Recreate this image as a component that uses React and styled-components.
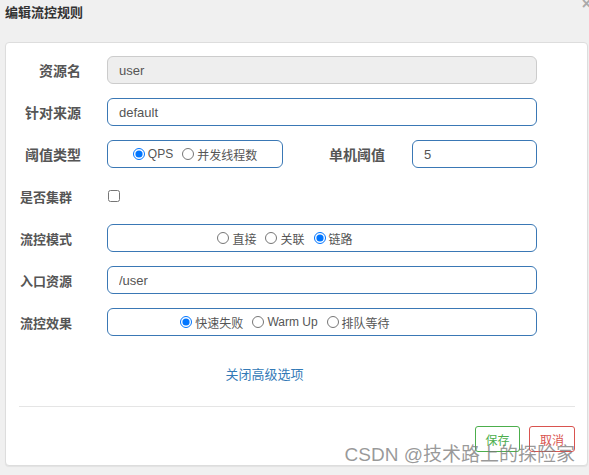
import React from 'react';
import styled, { createGlobalStyle } from 'styled-components';

const GlobalStyle = createGlobalStyle`
  html, body {
    margin: 0;
    padding: 0;
    background: #f0f0f0;
    font-family: "Liberation Sans", "Noto Sans CJK SC", sans-serif;
  }
  * { box-sizing: border-box; }
`;

const Page = styled.div`
  position: relative;
  width: 589px;
  height: 475px;
  overflow: hidden;
  background: #f0f0f0;
`;

const Header = styled.div`
  height: 42px;
  padding: 6px 5px 0;
`;

const Title = styled.h4`
  margin: 0;
  font-size: 13px;
  line-height: 14px;
  font-weight: bold;
  color: #333;
`;

const Close = styled.span`
  position: absolute;
  top: -5px;
  right: -2px;
  font-size: 16px;
  color: #aaa;
  font-weight: bold;
`;

const Card = styled.div`
  margin: 0 1px 0 5px;
  background: #fff;
  border: 1px solid #ddd;
  border-radius: 4px;
  box-shadow: 0 1px 1px rgba(0, 0, 0, 0.06);
  padding: 13px 0 13px;
`;

const Row = styled.div`
  display: grid;
  grid-template-columns: 75px 1fr;
  column-gap: 26px;
  align-items: center;
  height: 28px;
  margin: 0 50px 14px 0;
`;

const Label = styled.label`
  font-size: ${p => (p.$small ? '13px' : '14px')};
  font-weight: bold;
  color: #555;
  text-align: right;
  padding-right: ${p => (p.$small ? '9px' : '0')};
  white-space: nowrap;
`;

const Input = styled.input`
  width: ${p => (p.$width ? p.$width : '100%')};
  height: 28px;
  padding: 0 11px;
  font-family: inherit;
  font-size: 13px;
  color: #555;
  background: ${p => (p.disabled ? '#eee' : '#fff')};
  border: 1px solid ${p => (p.disabled ? '#ccc' : '#3a78b5')};
  border-radius: 6px;
  outline: none;
  margin-left: ${p => (p.$gap ? p.$gap : '0')};
`;

const Inline = styled.div`
  display: flex;
  align-items: center;
`;

const RadioBox = styled.div`
  display: flex;
  align-items: center;
  justify-content: center;
  gap: 9px;
  width: ${p => (p.$width ? p.$width : '100%')};
  height: 28px;
  padding-right: ${p => (p.$shift ? p.$shift : '0')};
  border: 1px solid #3a78b5;
  border-radius: 6px;
`;

const RadioLabel = styled.label`
  display: flex;
  align-items: center;
  gap: 3px;
  font-size: 12px;
  color: #555;
  white-space: nowrap;

  input {
    margin: 0;
    width: 12px;
    height: 12px;
  }
`;

const SideLabel = styled.label`
  flex: 1;
  text-align: right;
  font-size: 14px;
  font-weight: bold;
  color: #555;
`;

const Check = styled.input`
  margin: 0 0 0 1px;
  width: 12px;
  height: 12px;
`;

const Toggle = styled.div`
  margin-top: 30px;
  padding-right: 64px;
  text-align: center;
  font-size: 13px;
  line-height: 18px;
  color: #337ab7;
`;

const Divider = styled.hr`
  margin: 22px 12px 0 13px;
  border: 0;
  border-top: 1px solid #e5e5e5;
`;

const Footer = styled.div`
  display: flex;
  justify-content: flex-end;
  gap: 9px;
  margin: 19px 12px 0 0;
`;

const Button = styled.button`
  height: 26px;
  width: ${p => p.$w};
  padding: 0;
  background: #fff;
  font-family: inherit;
  font-size: 12px;
  border-radius: 3px;
  color: ${p => p.$color};
  border: 1px solid ${p => p.$color};
`;

const Watermark = styled.div`
  position: absolute;
  right: 14px;
  top: 444px;
  font-size: 19px;
  line-height: 22px;
  color: rgba(120, 120, 120, 0.75);
  white-space: nowrap;
  pointer-events: none;
`;

const Radio = ({ name, checked, children }) => (
  <RadioLabel>
    <input type="radio" name={name} defaultChecked={checked} />
    {children}
  </RadioLabel>
);

export default function App() {
  return (
    <Page>
      <GlobalStyle />
      <Header>
        <Title>编辑流控规则</Title>
      </Header>
      <Close>×</Close>
      <Card>
        <Row>
          <Label>资源名</Label>
          <Input disabled defaultValue="user" />
        </Row>
        <Row>
          <Label>针对来源</Label>
          <Input defaultValue="default" />
        </Row>
        <Row>
          <Label>阈值类型</Label>
          <Inline>
            <RadioBox $width="176px">
              <Radio name="grade" checked>QPS</Radio>
              <Radio name="grade">并发线程数</Radio>
            </RadioBox>
            <SideLabel>单机阈值</SideLabel>
            <Input $width="125px" $gap="27px" defaultValue="5" />
          </Inline>
        </Row>
        <Row>
          <Label $small>是否集群</Label>
          <Inline>
            <Check type="checkbox" />
          </Inline>
        </Row>
        <Row>
          <Label $small>流控模式</Label>
          <RadioBox $shift="74px">
            <Radio name="strategy">直接</Radio>
            <Radio name="strategy">关联</Radio>
            <Radio name="strategy" checked>链路</Radio>
          </RadioBox>
        </Row>
        <Row>
          <Label $small>入口资源</Label>
          <Input defaultValue="/user" />
        </Row>
        <Row>
          <Label $small>流控效果</Label>
          <RadioBox $shift="74px">
            <Radio name="behavior" checked>快速失败</Radio>
            <Radio name="behavior">Warm Up</Radio>
            <Radio name="behavior">排队等待</Radio>
          </RadioBox>
        </Row>
        <Toggle>关闭高级选项</Toggle>
        <Divider />
        <Footer>
          <Button $w="45px" $color="#4cae4c">保存</Button>
          <Button $w="46px" $color="#d9534f">取消</Button>
        </Footer>
      </Card>
      <Watermark>CSDN @技术路上的探险家</Watermark>
    </Page>
  );
}
